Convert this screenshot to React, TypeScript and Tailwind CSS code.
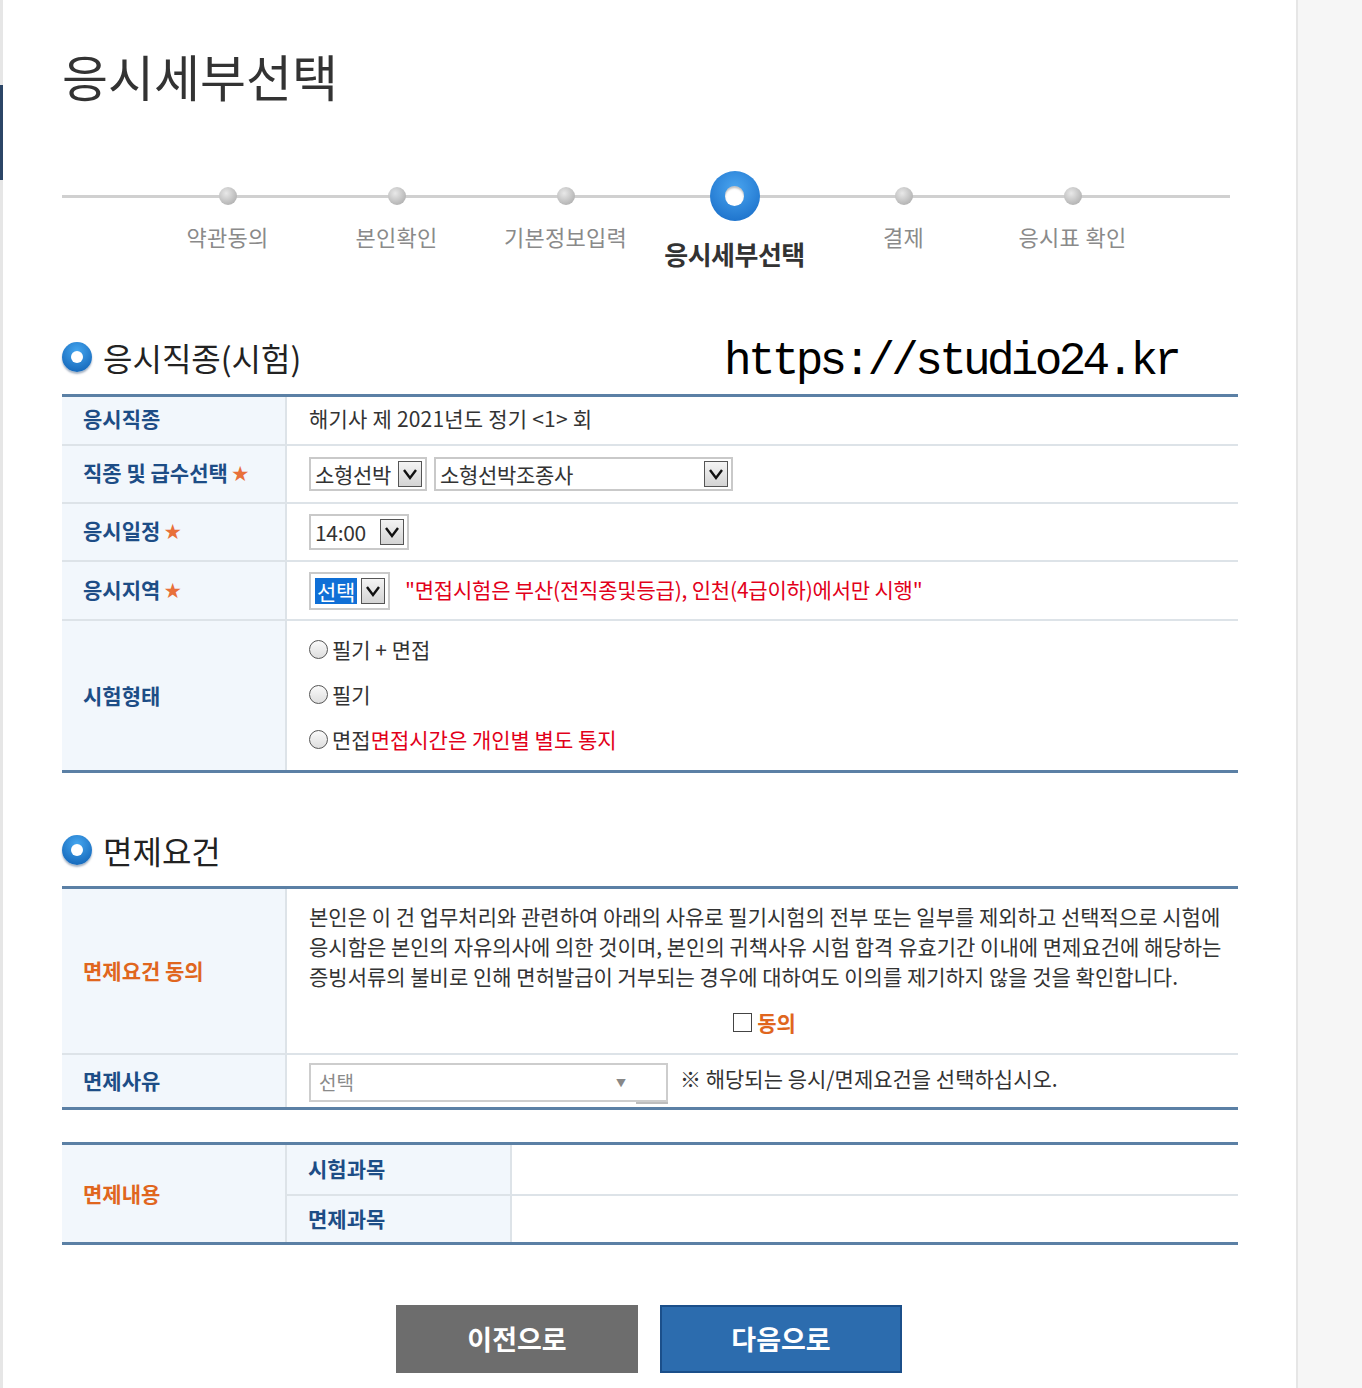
import React from "react";

const steps = [
  { label: "약관동의", active: false },
  { label: "본인확인", active: false },
  { label: "기본정보입력", active: false },
  { label: "응시세부선택", active: true },
  { label: "결제", active: false },
  { label: "응시표 확인", active: false },
];

function Chevron() {
  return (
    <span className="flex h-[26px] w-[24px] items-center justify-center border border-[#555] bg-[linear-gradient(#f4f4f4,#d4d4d4)]">
      <svg width="16" height="12" viewBox="0 0 16 12">
        <polyline points="2,2 8,10 14,2" fill="none" stroke="#111" strokeWidth="2.4" />
      </svg>
    </span>
  );
}

function FakeSelect({
  value,
  width,
  height = "h-[34px]",
  selected = false,
}: {
  value: string;
  width: string;
  height?: string;
  selected?: boolean;
}) {
  return (
    <div
      className={`flex items-center justify-between border-2 border-[#c9c9c9] bg-white pl-[4px] pr-[3px] ${width} ${height}`}
    >
      <span
        className={`text-[21px] leading-[26px] tracking-[-0.3px] ${
          selected ? "bg-[#0f6fd6] px-[2px] text-white" : "text-[#333]"
        }`}
      >
        {value}
      </span>
      <Chevron />
    </div>
  );
}

function SectionTitle({ text }: { text: string }) {
  return (
    <div className="flex h-[50px] items-center gap-[11px]">
      <span className="flex h-[30px] w-[30px] items-center justify-center rounded-full bg-[radial-gradient(circle_at_50%_30%,#45a6ef,#0c5cb0)] shadow-[0_2px_2px_rgba(0,40,90,0.35)]">
        <span className="h-[12px] w-[12px] rounded-full bg-white" />
      </span>
      <h2 className="text-[32px] leading-[40px] text-[#222]">{text}</h2>
    </div>
  );
}

function Radio({ children }: { children: React.ReactNode }) {
  return (
    <div className="flex h-[45px] items-center gap-[4px] text-[21px] text-[#333]">
      <span className="h-[19px] w-[19px] rounded-full border-[1.5px] border-[#555] bg-[linear-gradient(#fafafa,#dedede)]" />
      <span>{children}</span>
    </div>
  );
}

const labelCell =
  "flex w-[225px] shrink-0 items-center border-r-2 border-[#dde3e8] bg-[#f2f7fc] pl-[21px] text-[21px] font-bold";

function Star() {
  return <span className="ml-[4px] text-[17px] text-[#e8703a]">★</span>;
}

export default function App() {
  return (
    <div className="flex min-h-[1388px] w-full font-['Noto_Sans_CJK_KR','Noto_Sans',sans-serif] text-[#333]">
      <main className="relative w-[1298px] shrink-0 border-r-2 border-l-[3px] border-[#e6e6e6] bg-white pl-[59px]">
        <span className="absolute left-[-3px] top-[85px] h-[95px] w-[3px] bg-[#2b4566]" />

        <h1 className="mt-[45px] h-[60px] text-[50px] leading-[60px] text-[#333]">
          응시세부선택
        </h1>

        {/* progress */}
        <div className="relative mt-[66px] w-[1168px] pl-[81px]">
          <span className="absolute left-0 top-[24px] h-[3px] w-[1168px] bg-[#d0d0d0]" />
          <div className="relative flex">
            {steps.map((s) => (
              <div key={s.label} className="flex w-[169px] flex-col items-center">
                <div className="flex h-[50px] items-center justify-center">
                  {s.active ? (
                    <span className="flex h-[50px] w-[50px] items-center justify-center rounded-full bg-[radial-gradient(circle_at_50%_35%,#4aa5f0,#1468c4)]">
                      <span className="h-[20px] w-[19px] rounded-full bg-white shadow-[inset_0_2px_2px_rgba(0,0,0,0.25)]" />
                    </span>
                  ) : (
                    <span className="h-[18px] w-[18px] rounded-full bg-[radial-gradient(circle_at_40%_35%,#e8e8e8,#a2a2a2)]" />
                  )}
                </div>
                {s.active ? (
                  <span className="mt-[17px] text-[26px] font-bold leading-[32px] tracking-[-0.5px] text-[#333]">
                    {s.label}
                  </span>
                ) : (
                  <span className="mt-[-1px] text-[22px] leading-[32px] tracking-[0.3px] text-[#8a8a8a]">
                    {s.label}
                  </span>
                )}
              </div>
            ))}
          </div>
        </div>

        {/* 응시직종 */}
        <div className="relative mt-[62px] w-[1176px]">
          <SectionTitle text="응시직종(시험)" />
          <span className="absolute left-[662px] top-[4px] font-['Liberation_Mono',monospace] text-[46px] leading-[52px] tracking-[-3.7px] text-black">
            https://studio24.kr
          </span>
        </div>

        <div className="mt-[12px] w-[1176px] border-y-[3px] border-[#5b80a5]">
          <div className="flex h-[49px] border-b-2 border-[#dde3e8]">
            <div className={`${labelCell} pb-[3px] text-[#1d4d86]`}>응시직종</div>
            <div className="flex items-center pb-[3px] pl-[22px] text-[21px] tracking-[0.2px]">
              해기사 제 2021년도 정기 &lt;1&gt; 회
            </div>
          </div>
          <div className="flex h-[58px] border-b-2 border-[#dde3e8]">
            <div className={`${labelCell} pb-[2px] text-[#1d4d86]`}>
              직종 및 급수선택
              <Star />
            </div>
            <div className="flex items-center gap-[7px] pl-[22px]">
              <FakeSelect value="소형선박" width="w-[118px]" />
              <FakeSelect value="소형선박조종사" width="w-[299px]" />
            </div>
          </div>
          <div className="flex h-[58px] border-b-2 border-[#dde3e8]">
            <div className={`${labelCell} pb-[2px] text-[#1d4d86]`}>
              응시일정
              <Star />
            </div>
            <div className="flex items-center pl-[22px]">
              <FakeSelect value="14:00" width="w-[100px]" height="h-[36px]" />
            </div>
          </div>
          <div className="flex h-[59px] border-b-2 border-[#dde3e8]">
            <div className={`${labelCell} pb-[2px] text-[#1d4d86]`}>
              응시지역
              <Star />
            </div>
            <div className="flex items-center gap-[15px] pl-[22px]">
              <FakeSelect value="선택" width="w-[81px]" height="h-[38px]" selected />
              <span className="pb-[2px] text-[21px] tracking-[-0.2px] text-[#e2001a]">
                "면접시험은 부산(전직종및등급), 인천(4급이하)에서만 시행"
              </span>
            </div>
          </div>
          <div className="flex h-[149px]">
            <div className={`${labelCell} text-[#1d4d86]`}>시험형태</div>
            <div className="flex flex-col justify-center pb-[2px] pl-[22px]">
              <Radio>필기 + 면접</Radio>
              <Radio>필기</Radio>
              <Radio>
                면접<span className="text-[#e2001a]">면접시간은 개인별 별도 통지</span>
              </Radio>
            </div>
          </div>
        </div>

        {/* 면제요건 */}
        <div className="mt-[52px]">
          <SectionTitle text="면제요건" />
        </div>

        <div className="mt-[11px] w-[1176px] border-y-[3px] border-[#5b80a5]">
          <div className="flex h-[166px] border-b-2 border-[#dde3e8]">
            <div className={`${labelCell} text-[#e0661e]`}>면제요건 동의</div>
            <div className="flex flex-1 flex-col pl-[22px] pt-[12px]">
              <p className="text-[21px] leading-[30px] text-[#333]">
                본인은 이 건 업무처리와 관련하여 아래의 사유로 필기시험의 전부 또는 일부를 제외하고 선택적으로 시험에
                <br />
                응시함은 본인의 자유의사에 의한 것이며, 본인의 귀책사유 시험 합격 유효기간 이내에 면제요건에 해당하는
                <br />
                증빙서류의 불비로 인해 면허발급이 거부되는 경우에 대하여도 이의를 제기하지 않을 것을 확인합니다.
              </p>
              <div className="mt-[16px] flex items-center justify-center gap-[5px] pl-[2px] pr-[20px]">
                <span className="h-[19px] w-[19px] border-[1.5px] border-[#444] bg-white" />
                <span className="text-[21px] font-bold text-[#e0661e]">동의</span>
              </div>
            </div>
          </div>
          <div className="flex h-[52px]">
            <div className={`${labelCell} text-[#1d4d86]`}>면제사유</div>
            <div className="flex items-start gap-[12px] pl-[22px] pt-[8px]">
              <div className="relative">
                <div className="flex h-[39px] w-[359px] items-center justify-between border-2 border-[#cdcdcd] bg-white pl-[8px] pr-[40px]">
                  <span className="text-[19px] text-[#8a8a8a]">선택</span>
                  <span className="text-[10px] text-[#888]">▼</span>
                </div>
                <span className="absolute right-0 top-[39px] h-[2px] w-[32px] bg-[#bdbdbd]" />
              </div>
              <span className="text-[21px] text-[#333]">
                ※ 해당되는 응시/면제요건을 선택하십시오.
              </span>
            </div>
          </div>
        </div>

        {/* 면제내용 */}
        <div className="mt-[32px] flex w-[1176px] border-y-[3px] border-[#5b80a5]">
          <div className={`${labelCell} text-[#e0661e]`}>면제내용</div>
          <div className="flex flex-1 flex-col">
            <div className="flex h-[51px] border-b-2 border-[#dde3e8]">
              <div className={`${labelCell} pb-[2px] text-[#1d4d86]`}>시험과목</div>
              <div className="flex-1 bg-white" />
            </div>
            <div className="flex h-[46px]">
              <div className={`${labelCell} text-[#1d4d86]`}>면제과목</div>
              <div className="flex-1 bg-white" />
            </div>
          </div>
        </div>

        {/* buttons */}
        <div className="mt-[60px] flex w-[1176px] justify-center gap-[22px] pr-[2px]">
          <button
            type="button"
            className="h-[68px] w-[242px] bg-[#6d6d6d] text-[27px] font-bold text-white"
          >
            이전으로
          </button>
          <button
            type="button"
            className="h-[68px] w-[242px] border-2 border-[#1b4f8a] bg-[#2c6cae] text-[27px] font-bold text-white"
          >
            다음으로
          </button>
        </div>
      </main>
      <aside className="flex-1 bg-[#f6f6f6]" />
    </div>
  );
}
